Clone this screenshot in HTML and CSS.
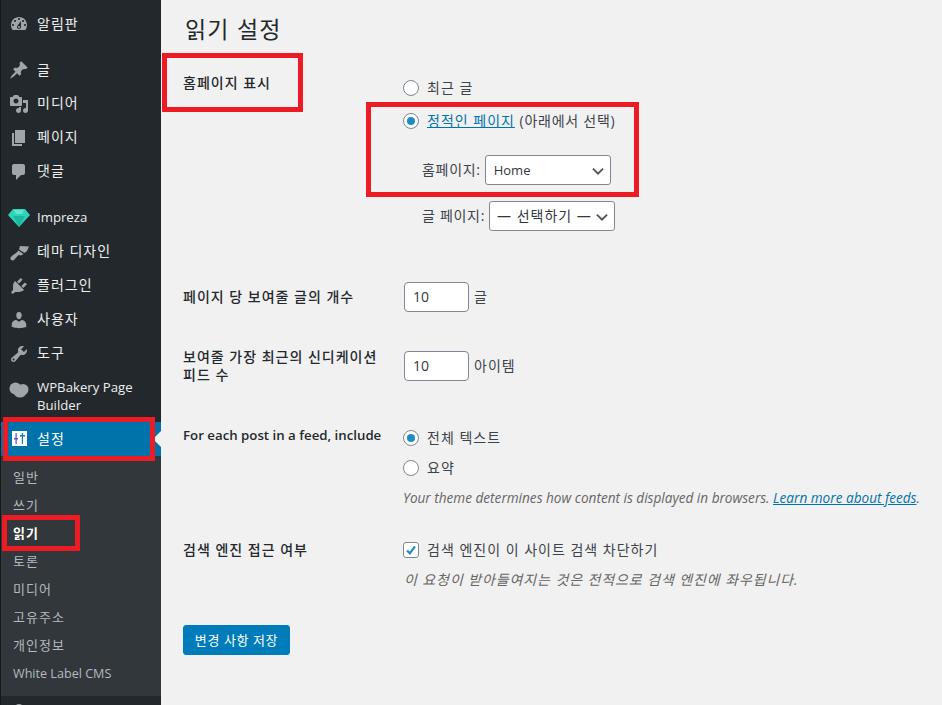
FILE: index.html
```html
<!DOCTYPE html>
<html lang="ko">
<head>
<meta charset="utf-8">
<title>읽기 설정</title>
<link rel="stylesheet" href="styles.css">
</head>
<body>
<div class="page">
  <nav class="side">
    <a class="item low"><svg class="ico" viewBox="0 0 20 20"><path d="M3.760 16h12.480c1.100-1.370 1.760-3.110 1.760-5 0-4.420-3.580-8-8-8s-8 3.580-8 8c0 1.890.66 3.630 1.760 5zM10 4c.55 0 1 .45 1 1s-.45 1-1 1-1-.45-1-1 .45-1 1-1zM6 6c.55 0 1 .45 1 1s-.45 1-1 1-1-.45-1-1 .45-1 1-1zm8 0c.55 0 1 .45 1 1s-.45 1-1 1-1-.45-1-1 .45-1 1-1zm-5.370 5.550L12 7v6c0 1.100-.9 2-2 2s-2-.9-2-2c0-.57.24-1.080.63-1.450zM4 10c.55 0 1 .45 1 1s-.45 1-1 1-1-.45-1-1 .45-1 1-1zm12 0c.55 0 1 .45 1 1s-.45 1-1 1-1-.45-1-1 .45-1 1-1zm-5 3c0-.55-.45-1-1-1s-1 .45-1 1 .45 1 1 1 1-.45 1-1z"/></svg><span class="ko">알림판</span></a>
    <div class="sep"></div>
    <a class="item low"><svg class="ico" viewBox="0 0 20 20"><path d="M10.440 3.020l1.820-1.820 6.360 6.350-1.830 1.820c-1.050-.68-2.480-.57-3.410.36l-.75.75c-.92.93-1.040 2.350-.35 3.410l-1.830 1.820-2.410-2.410-2.800 2.790c-.42.42-3.380 2.710-3.800 2.290s1.860-3.390 2.280-3.810l2.790-2.790L4.100 9.360l1.830-1.820c1.050.69 2.480.57 3.410-.36l.75-.75c.93-.92 1.050-2.350.35-3.410z"/></svg><span class="ko">글</span></a>
    <a class="item"><svg class="ico" viewBox="0 0 20 20"><path d="M13 11V4c0-.55-.45-1-1-1h-1.670L9 1H5L3.670 3H2c-.55 0-1 .45-1 1v7c0 .55.45 1 1 1h10c.55 0 1-.45 1-1zM7 4.500c1.380 0 2.500 1.120 2.500 2.500S8.380 9.500 7 9.500 4.500 8.380 4.500 7 5.620 4.500 7 4.500zM14 6h5v10.500c0 1.380-1.120 2.500-2.500 2.500S14 17.880 14 16.500s1.120-2.500 2.500-2.500c.17 0 .34.02.5.05V9h-3V6zm-4 8.050V13h2v3.500c0 1.380-1.120 2.500-2.500 2.500S7 17.880 7 16.500 8.120 14 9.500 14c.17 0 .34.02.5.05z"/></svg><span class="ko">미디어</span></a>
    <a class="item"><svg class="ico" viewBox="0 0 20 20"><path d="M6 15V2h10v13H6zm-1 1h8v2H3V5h2v11z"/></svg><span class="ko">페이지</span></a>
    <a class="item"><svg class="ico" viewBox="0 0 20 20"><path d="M5 2h9c1.100 0 2 .9 2 2v7c0 1.100-.9 2-2 2h-2l-5 5v-5H5c-1.100 0-2-.9-2-2V4c0-1.100.9-2 2-2z"/></svg><span class="ko">댓글</span></a>
    <div class="sep"></div>
    <a class="item"><svg class="ico gem" viewBox="0 0 22 18"><path fill="#2fd3ba" d="M5 0h12l5 6-11 12L0 6z"/><path fill="#1cb8a2" d="M5 7h12l-6 11z"/><path fill="#5ce8d2" d="M6 1h10l-2 4H8z"/></svg><span class="lat">Impreza</span></a>
    <a class="item"><svg class="ico" viewBox="0 0 20 20"><path d="M11 4l9 .5L18 9l-2.500 2L10 7.500z"/><path d="M9.500 8.500l5 3.500-2.500 1.500c-2-1-2.500-.5-3.500.5L5 18c-1.500 1-4 0-3.500-2.500C3 13.500 5 12.500 7 11z"/></svg><span class="ko">테마 디자인</span></a>
    <a class="item"><svg class="ico" viewBox="0 0 20 20"><path d="M13.110 4.360L9.870 7.600 8 5.730l3.240-3.240c.35-.34 1.050-.2 1.560.32.52.51.66 1.210.31 1.550zm-8 1.770l.91-1.120 9.010 9.010-1.190.84c-.71.71-2.630 1.160-3.820 1.160H6.140L4.900 17.260c-.59.59-1.540.59-2.120 0-.59-.58-.59-1.530 0-2.120l1.240-1.240v-3.880c0-1.130.4-3.190 1.090-3.890zm7.260 3.970l3.240-3.240c.34-.35 1.040-.21 1.550.31.52.51.66 1.210.31 1.550l-3.240 3.250z"/></svg><span class="ko">플러그인</span></a>
    <a class="item"><svg class="ico" viewBox="0 0 20 20"><path d="M10 9.250c-2.270 0-2.730-3.440-2.730-3.440C7 4.020 7.820 2 9.970 2c2.160 0 2.980 2.020 2.710 3.810 0 0-.41 3.440-2.680 3.440zm0 2.570L12.720 10c2.390 0 4.520 2.330 4.520 4.530v2.490s-3.650 1.130-7.240 1.130c-3.650 0-7.240-1.130-7.240-1.130v-2.490c0-2.250 1.940-4.480 4.470-4.480z"/></svg><span class="ko">사용자</span></a>
    <a class="item"><svg class="ico" viewBox="0 0 20 20"><path d="M16.680 9.770c-1.340 1.340-3.300 1.670-4.950.99l-5.410 6.520c-.99.99-2.590.99-3.580 0s-.99-2.590 0-3.570l6.520-5.420c-.68-1.650-.35-3.610.99-4.950 1.280-1.280 3.120-1.620 4.720-1.060l-2.890 2.890 2.820 2.820 2.860-2.870c.53 1.580.18 3.390-1.080 4.650zM3.810 16.210c.4.39 1.040.39 1.430 0 .4-.4.4-1.040 0-1.430-.39-.4-1.030-.4-1.430 0-.39.39-.39 1.030 0 1.430z"/></svg><span class="ko">도구</span></a>
    <a class="item two"><svg class="ico" viewBox="0 0 20 20"><circle cx="6.500" cy="9.500" r="6"/><circle cx="14" cy="10.500" r="5.500"/><ellipse cx="11" cy="14" rx="6" ry="4.500"/></svg><span class="lat">WPBakery Page Builder</span></a>
    <a class="item current low"><svg class="ico" viewBox="0 0 20 20"><path fill="#fff" d="M3 2h15v15H3z"/><path fill="#5b4fc4" d="M6.500 4h1.200v11H6.500z"/><path fill="#5b4fc4" d="M5 9h4v1.500H5z"/><path fill="#0a7fb5" d="M12.800 4H14v11h-1.200z"/><path fill="#0a7fb5" d="M11 6h5v1.500h-5z"/></svg><span class="ko">설정</span></a>
    <div class="sub">
      <a class="ko">일반</a>
      <a class="ko">쓰기</a>
      <a class="ko on">읽기</a>
      <a class="ko">토론</a>
      <a class="ko">미디어</a>
      <a class="ko">고유주소</a>
      <a class="ko">개인정보</a>
      <a class="lat-sub">White Label CMS</a>
    </div>
    <div class="tail"></div>
  </nav>

  <main class="main">
    <h1 class="title">읽기 설정</h1>
    <section class="row r1">
      <div class="th ko">홈페이지 표시</div>
      <div class="td">
        <label class="opt"><span class="radio"></span><span class="ko">최근 글</span></label>
        <label class="opt second"><span class="radio on"></span><span class="ko"><a class="link">정적인 페이지</a> <span class="paren">(아래에서 선택)</span></span></label>
        <div class="sel-row home"><span class="ko tight">홈페이지:</span><span class="select">Home<svg class="chev" viewBox="0 0 12 8"><path d="M1.500 1.500 6 6l4.500-4.500"/></svg></span></div>
        <div class="sel-row post"><span class="ko tight">글 페이지:</span><span class="select ko">— 선택하기 —<svg class="chev" viewBox="0 0 12 8"><path d="M1.500 1.500 6 6l4.500-4.500"/></svg></span></div>
      </div>
    </section>
    <section class="row r2">
      <div class="th ko">페이지 당 보여줄 글의 개수</div>
      <div class="td inline"><span class="num">10</span><span class="ko">글</span></div>
    </section>
    <section class="row r3">
      <div class="th ko">보여줄 가장 최근의 신디케이션<br>피드 수</div>
      <div class="td inline"><span class="num">10</span><span class="ko">아이템</span></div>
    </section>
    <section class="row r4">
      <div class="th">For each post in a feed, include</div>
      <div class="td">
        <label class="opt"><span class="radio on"></span><span class="ko">전체 텍스트</span></label>
        <label class="opt third"><span class="radio"></span><span class="ko">요약</span></label>
        <p class="desc">Your theme determines how content is displayed in browsers. <a class="link">Learn more about feeds</a>.</p>
      </div>
    </section>
    <section class="row r5">
      <div class="th ko">검색 엔진 접근 여부</div>
      <div class="td">
        <label class="opt"><span class="check"><svg viewBox="0 0 16 16"><path d="M3.500 8.500 6.700 11.800 12.500 3.800"/></svg></span><span class="ko">검색 엔진이 이 사이트 검색 차단하기</span></label>
        <p class="desc d2">이 요청이 받아들여지는 것은 전적으로 검색 엔진에 좌우됩니다.</p>
      </div>
    </section>
    <button class="save">변경 사항 저장</button>
  </main>
  <div class="mark m1"></div>
  <div class="mark m2"></div>
  <div class="mark m3"></div>
  <div class="mark m4"></div>
</div>
</body>
</html>
```
FILE: styles.css
```css
* { box-sizing: border-box; }
html, body { margin: 0; padding: 0; }
body {
  width: 942px; height: 705px; overflow: hidden;
  background: #f1f1f1; color: #3c434a;
  font: 13px/20px "Open Sans", "Noto Sans CJK KR", sans-serif;
}
.page { position: relative; display: flex; width: 942px; height: 705px; overflow: hidden; }
.ko { letter-spacing: 1px; }
.ko.tight { letter-spacing: .7px; }
.paren { letter-spacing: .75px; }

.side {
  width: 161px; height: 705px; flex: none; padding-top: 7px; overflow: hidden;
  background: #23282d; border-left: 1px solid #14171a;
  color: #eee; font-size: 14px;
}
.item { display: flex; align-items: center; height: 34px; padding-left: 8px; line-height: 18px; }
.item span { margin-bottom: 2px; }
.item.low span { margin-bottom: 0; }
.item .lat { font-size: 13.200px; }
.item.two { height: 51px; align-items: flex-start; padding-top: 7px; }
.item.two .ico { margin-top: 1px; }
.item.two span { width: 118px; }
.ico { width: 20px; height: 20px; flex: none; margin-right: 8px; fill: #a0a5aa; }
.ico.gem { width: 22px; height: 18px; margin: 0 7px 0 -1px; }
.sep { height: 12px; }
.current { position: relative; background: #0073aa; color: #fff; }
.current::after {
  content: ""; position: absolute; right: 0; top: 9px;
  border: 8px solid transparent; border-right-color: #f1f1f1; border-left-width: 0;
}
.sub { background: #32373c; padding: 8px 0; height: 240px; }
.sub a { display: block; height: 28px; line-height: 26px; padding-left: 12px; color: #b4b9be; font-size: 13px; }
.sub a.on { color: #fff; font-weight: 700; }
.sub a.lat-sub { font-size: 12.600px; line-height: 28px; }
.tail { width: 8px; height: 8px; margin: 8px 0 0 14px; border-radius: 50%; background: #a0a5aa; }

.main { flex: 1; padding-left: 22px; min-width: 0; }
.title { margin: 0; padding: 13px 0 0 2px; height: 56px; font-size: 23px; line-height: 33px; font-weight: 400; color: #23282d; letter-spacing: 1.200px; }
.row { display: flex; }
.th { width: 220px; flex: none; font-weight: 600; color: #23282d; font-size: 13.250px; line-height: 18px; }
.th.ko { font-size: 14px; font-weight: 500; }
.td { color: #3c434a; font-size: 14px; line-height: 20px; }
.r1 { height: 226px; padding-top: 18px; }
.r1 .td { padding-top: 4px; }
.r2 { height: 66px; }
.r2 .th { padding-top: 6px; }
.r3 { height: 78px; }
.r3 .td { margin-top: 3px; }
.r4 { height: 115px; }
.r4 .td { padding-top: 2px; }
.r5 { height: 84px; }
.r5 .td { margin-top: -1px; }
.opt { display: flex; align-items: center; height: 20px; gap: 8px; }
.second { margin-top: 13px; }
.third { margin-top: 10px; }
.radio {
  position: relative; width: 16px; height: 16px; flex: none; border-radius: 50%;
  background: #fff; border: 1px solid #7e8993;
}
.radio.on::after {
  content: ""; position: absolute; left: 3px; top: 3px; width: 8px; height: 8px;
  border-radius: 50%; background: #1e8cbe;
}
.link { color: #0073aa; text-decoration: underline; }
.sel-row { display: flex; align-items: center; gap: 4px; padding-left: 19px; }
.home { margin-top: 24px; }
.post { margin-top: 16px; }
.select {
  position: relative; display: flex; align-items: center; width: 126px; height: 30px;
  padding-left: 8px; background: #fff; border: 1px solid #7e8993; border-radius: 3px; color: #32373c;
  font-size: 13px;
}
.select.ko { font-size: 14px; padding-left: 7px; }
.chev { position: absolute; right: 5px; top: 11px; width: 14px; height: 9px; fill: none; stroke: #555; stroke-width: 1.700; }
.inline { display: flex; align-items: center; height: 30px; gap: 5px; padding-left: 1px; }
.num {
  display: block; width: 65px; height: 30px; line-height: 28px; padding-left: 8px;
  background: #fff; border: 1px solid #7e8993; border-radius: 4px; color: #32373c;
}
.desc { margin: 10px 0 0; color: #666; font-size: 13.600px; font-style: italic; white-space: nowrap; }
.d2 { font-size: 14px; letter-spacing: .9px; padding-left: 1px; }
.check {
  width: 16px; height: 16px; flex: none; background: #fff; border: 1px solid #7e8993; border-radius: 3px;
}
.check svg { display: block; width: 14px; height: 14px; fill: none; stroke: #1e8cbe; stroke-width: 2.500; }
.save {
  display: block; width: 107px; height: 30px; padding: 0;
  background: #007cba; color: #fff; border: 1px solid #007cba; border-radius: 3px;
  font: 13px/28px "Open Sans", "Noto Sans CJK KR", sans-serif; letter-spacing: .6px;
}

.mark { position: absolute; border: 5px solid #ed1c24; pointer-events: none; }
.m1 { left: 162px; top: 53px; width: 141px; height: 59px; }
.m2 { left: 366px; top: 102px; width: 273px; height: 95px; }
.m3 { left: 3px; top: 417px; width: 152px; height: 44px; }
.m4 { left: 2px; top: 515px; width: 78px; height: 36px; }
```
